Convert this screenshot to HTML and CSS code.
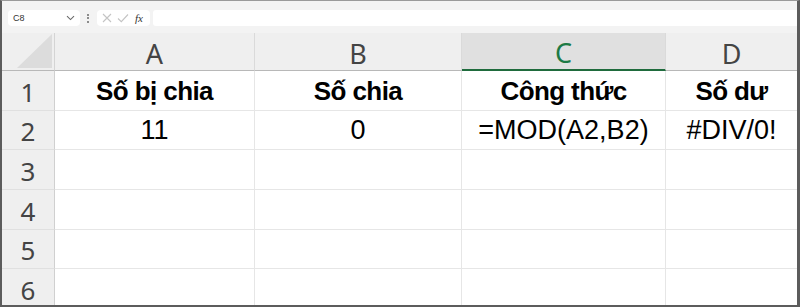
FILE: index.html
```html
<!DOCTYPE html>
<html lang="vi">
<head>
<meta charset="utf-8">
<link rel="stylesheet" href="styles.css">
</head>
<body>
<div class="frame">
  <div class="toolbar">
    <div class="namebox"><span class="ref">C8</span>
      <svg class="chev" width="9" height="6" viewBox="0 0 9 6"><path d="M1 1.2 L4.5 4.6 L8 1.2" fill="none" stroke="#6a6a6a" stroke-width="1.1"/></svg>
    </div>
    <div class="dots"><span></span><span></span><span></span></div>
    <div class="fxbox">
      <svg width="10" height="10" viewBox="0 0 10 10"><path d="M1 1 L9 9 M9 1 L1 9" stroke="#c4c4c4" stroke-width="1.1" fill="none"/></svg>
      <svg width="12" height="10" viewBox="0 0 12 10"><path d="M1 5.5 L4.3 8.6 L11 1.5" stroke="#c4c4c4" stroke-width="1.1" fill="none"/></svg>
      <span class="fx">fx</span>
    </div>
    <div class="formula"></div>
  </div>
  <div class="sheet">
    <div class="corner"><div class="tri"></div></div>
    <div class="colh">A</div>
    <div class="colh">B</div>
    <div class="colh active">C</div>
    <div class="colh last">D</div>

    <div class="rowh">1</div>
    <div class="cell bold">Số bị chia</div>
    <div class="cell bold">Số chia</div>
    <div class="cell bold">Công thức</div>
    <div class="cell bold last">Số dư</div>

    <div class="rowh">2</div>
    <div class="cell">11</div>
    <div class="cell">0</div>
    <div class="cell">=MOD(A2,B2)</div>
    <div class="cell last">#DIV/0!</div>

    <div class="rowh">3</div>
    <div class="cell"></div><div class="cell"></div><div class="cell"></div><div class="cell last"></div>
    <div class="rowh">4</div>
    <div class="cell"></div><div class="cell"></div><div class="cell"></div><div class="cell last"></div>
    <div class="rowh">5</div>
    <div class="cell"></div><div class="cell"></div><div class="cell"></div><div class="cell last"></div>
    <div class="rowh">6</div>
    <div class="cell"></div><div class="cell"></div><div class="cell"></div><div class="cell last"></div>
  </div>
</div>
</body>
</html>
```
FILE: styles.css
```css
* { box-sizing: border-box; }
html, body { margin: 0; padding: 0; background: #fff; }
body { font-family: "Liberation Sans", Arial, sans-serif; }

.frame {
  width: 800px;
  height: 307px;
  border-left: 2px solid #5c5c5c;
  border-top: 1px solid #9a9a9a;
  border-right: 3px solid #5c5c5c;
  border-bottom: 2px solid #5c5c5c;
  display: flex;
  flex-direction: column;
  overflow: hidden;
  background: #fff;
}

.toolbar {
  height: 32px;
  flex: none;
  background: #f3f3f3;
  display: flex;
  align-items: flex-start;
  padding: 9px 0 0 6px;
}
.namebox {
  width: 72px;
  height: 16px;
  background: #fff;
  border-radius: 4px;
  display: flex;
  align-items: center;
  justify-content: space-between;
  padding: 0 4px 0 5px;
}
.ref { font-size: 9px; color: #333; font-family: "Liberation Sans", sans-serif; }
.chev { margin-right: 1px; }
.dots {
  width: 16px;
  height: 16px;
  display: flex;
  flex-direction: column;
  align-items: center;
  justify-content: center;
  gap: 1.5px;
}
.dots span { width: 2px; height: 2px; background: #6a6a6a; border-radius: 1px; }
.fxbox {
  width: 53px;
  height: 16px;
  background: #fff;
  border-radius: 4px;
  display: flex;
  align-items: center;
  padding-left: 5px;
  gap: 5px;
  margin-left: 1px;
}
.fx {
  font-family: "Liberation Serif", "Times New Roman", serif;
  font-style: italic;
  font-size: 11px;
  color: #333;
  margin-left: 1px;
}
.formula {
  flex: 1;
  height: 16px;
  background: #fff;
  margin-left: 3px;
  border-radius: 3px 0 0 3px;
}

.sheet {
  flex: 1;
  display: grid;
  grid-template-columns: 53px 200px 207px 204px 1fr;
  grid-template-rows: 38px 40px 39px 40px 40px 39px 40px;
  color: #000;
}
.corner {
  background: #efefef;
  border-right: 1px solid #d4d4d4;
  border-bottom: 1px solid #b8b8b8;
  position: relative;
}
.tri {
  position: absolute;
  right: 2px;
  bottom: 2px;
  width: 35px;
  height: 34px;
  background: #dcdcdc;
  clip-path: polygon(100% 0, 100% 100%, 0 100%);
}
.colh {
  background: #efefef;
  border-right: 1px solid #dadada;
  border-bottom: 1px solid #b8b8b8;
  display: flex;
  align-items: center;
  justify-content: center;
  font-family: "Noto Sans", "Liberation Sans", sans-serif;
  font-size: 27px;
  color: #444;
  padding-top: 3px;
}
.colh.active {
  background: #e0e0e0;
  color: #1d7a45;
  border-bottom: 2px solid #1f6b3d;
}
.colh.last { border-right: none; }
.rowh {
  background: #efefef;
  border-right: 1px solid #d0d0d0;
  border-bottom: 1px solid #e0e0e0;
  display: flex;
  align-items: center;
  justify-content: center;
  font-family: "Noto Sans", "Liberation Sans", sans-serif;
  font-size: 26px;
  color: #444;
  padding-top: 2px;
}
.cell {
  border-right: 1px solid #e6e6e6;
  border-bottom: 1px solid #e6e6e6;
  display: flex;
  align-items: center;
  justify-content: center;
  font-size: 27px;
  white-space: nowrap;
  padding-top: 1px;
}
.cell.last { border-right: none; }
.bold { font-weight: bold; letter-spacing: -0.6px; font-size: 26px; }
```
